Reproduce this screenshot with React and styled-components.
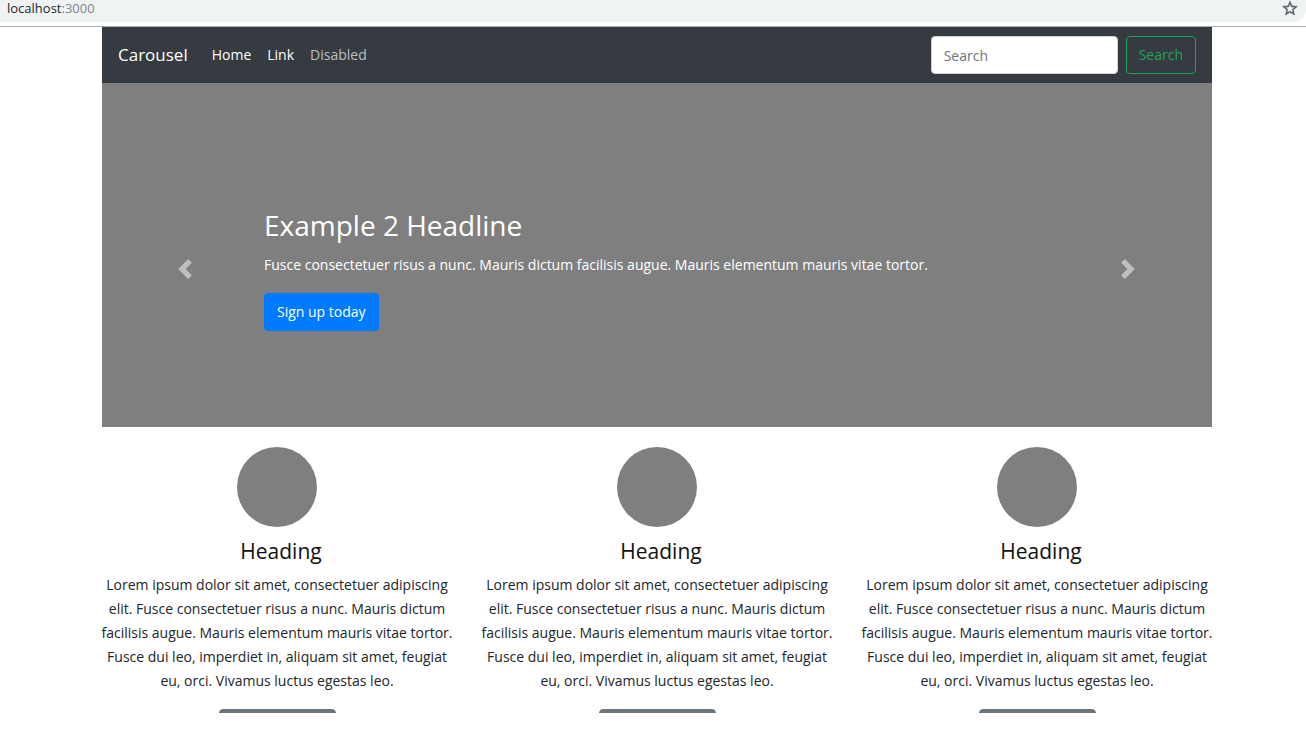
import React from "react";
import styled, { createGlobalStyle, css } from "styled-components";

const GlobalStyle = createGlobalStyle`
  *, *::before, *::after { box-sizing: border-box; }
  body {
    margin: 0;
    background: #fff;
    color: #212529;
    font-family: "Open Sans", "Noto Sans", sans-serif;
    font-size: 14px;
    line-height: 24px;
  }
  h1, h2, p { margin: 0; }
  button, input { font-family: inherit; font-size: inherit; line-height: inherit; }
`;

const Screen = styled.div`
  display: flex;
  flex-direction: column;
  height: 100vh;
  padding-bottom: 24px;
`;

const AddressBar = styled.header`
  display: flex;
  flex: none;
  align-items: flex-start;
  justify-content: space-between;
  height: 22px;
  margin-bottom: 4px;
  padding: 0 7px;
  background: #eff3f4;
  border-bottom-right-radius: 12px;
  font-size: 13px;
  line-height: 16px;
`;

const Port = styled.span`
  color: #80868b;
`;

const StarButton = styled.button`
  display: flex;
  padding: 0;
  border: 0;
  background: none;
  color: #5f6368;
`;

const Viewport = styled.div`
  flex: 1;
  min-height: 0;
  overflow: hidden;
  padding-left: 8px;
  border-top: 1px solid #a9abac;
`;

const Container = styled.div`
  max-width: 1110px;
  margin: 0 auto;
`;

const Navbar = styled.nav`
  display: flex;
  align-items: center;
  justify-content: space-between;
  height: 56px;
  padding: 0 16px;
  background: #353b41;
`;

const NavGroup = styled.div`
  display: flex;
  align-items: center;
  gap: 16px;
`;

const Brand = styled.a`
  margin-right: 8px;
  color: #fff;
  font-size: 17px;
  text-decoration: none;
`;

const NavLink = styled.a`
  color: ${(p) => (p.$muted ? "#bcbfc1" : "#fff")};
  font-weight: ${(p) => (p.$muted ? 400 : 500)};
  text-decoration: none;
`;

const SearchForm = styled.form`
  display: flex;
  gap: 8px;
`;

const SearchInput = styled.input`
  width: 187px;
  height: 38px;
  padding: 6px 12px;
  border: 1px solid #ced4da;
  border-radius: 4px;
  background: #fff;
  color: #495057;
  &::placeholder { color: #6c757d; opacity: 1; }
`;

const variants = {
  primary: css`
    border-color: #007bff;
    background: #007bff;
    color: #fff;
    font-weight: 500;
  `,
  outline: css`
    min-width: 70px;
    border-color: #1fa355;
    background: transparent;
    color: #1fa355;
  `,
  secondary: css`
    width: 117px;
    border-color: #6c757d;
    background: #6c757d;
    color: #fff;
  `,
};

const Button = styled.button`
  height: 38px;
  padding: 0 12px;
  border: 1px solid;
  border-radius: 4px;
  ${(p) => variants[p.$variant]}
`;

const Hero = styled.section`
  display: grid;
  grid-template-columns: 162px 1fr 162px;
  align-items: center;
  height: 344px;
  padding-top: 28px;
  background: #7f7f7f;
  color: #fff;
`;

const SlideControl = styled.button`
  display: flex;
  justify-content: center;
  padding: ${(p) => (p.$side === "left" ? "0 0 0 4px" : "0 6px 0 0")};
  border: 0;
  background: none;
  color: #fff;
  svg { opacity: 0.5; }
`;

const Headline = styled.h1`
  margin-bottom: 10px;
  font-size: 28px;
  font-weight: 400;
  line-height: 36px;
`;

const Lead = styled.p`
  margin-bottom: 16px;
  font-weight: 500;
`;

const Columns = styled.main`
  display: grid;
  grid-template-columns: repeat(3, 1fr);
  gap: 30px;
  padding-top: 20px;
`;

const Column = styled.article`
  display: flex;
  flex-direction: column;
  align-items: center;
  min-width: 0;
  text-align: center;
`;

const Circle = styled.div`
  width: 80px;
  height: 80px;
  margin-bottom: 8px;
  border-radius: 50%;
  background: #7f7f7f;
`;

const Heading = styled.h2`
  margin-bottom: 6px;
  padding-left: 8px;
  color: #111;
  font-size: 21px;
  font-weight: 400;
  line-height: 32px;
`;

const Copy = styled.p`
  margin-bottom: 16px;
  white-space: nowrap;
`;

const copyLines = [
  "Lorem ipsum dolor sit amet, consectetuer adipiscing",
  "elit. Fusce consectetuer risus a nunc. Mauris dictum",
  "facilisis augue. Mauris elementum mauris vitae tortor.",
  "Fusce dui leo, imperdiet in, aliquam sit amet, feugiat",
  "eu, orci. Vivamus luctus egestas leo.",
];

function Chevron({ d }) {
  return (
    <svg width="20" height="20" viewBox="0 0 8 8" fill="currentColor" aria-hidden="true">
      <path d={d} />
    </svg>
  );
}

export default function App() {
  return (
    <Screen>
      <GlobalStyle />
      <AddressBar>
        <span>localhost<Port>:3000</Port></span>
        <StarButton type="button" aria-label="Bookmark this page">
          <svg width="18" height="16" viewBox="1 1 22 21" fill="currentColor" stroke="currentColor" strokeWidth="0.5" aria-hidden="true">
            <path d="M22 9.24l-7.19-.62L12 2 9.19 8.63 2 9.24l5.46 4.73L5.82 21 12 17.27 18.18 21l-1.63-7.03L22 9.24zM12 15.4l-3.76 2.27 1-4.28-3.32-2.88 4.38-.38L12 6.1l1.71 4.04 4.38.38-3.32 2.88 1 4.28L12 15.4z" />
          </svg>
        </StarButton>
      </AddressBar>
      <Viewport>
        <Container>
          <Navbar>
            <NavGroup>
              <Brand href="#">Carousel</Brand>
              <NavLink href="#">Home</NavLink>
              <NavLink href="#">Link</NavLink>
              <NavLink $muted aria-disabled="true" href="#">Disabled</NavLink>
            </NavGroup>
            <SearchForm role="search">
              <SearchInput type="text" placeholder="Search" aria-label="Search" />
              <Button type="button" $variant="outline">Search</Button>
            </SearchForm>
          </Navbar>
          <Hero>
            <SlideControl type="button" $side="left" aria-label="Previous">
              <Chevron d="M5.25 0l-4 4 4 4 1.5-1.5-2.5-2.5 2.5-2.5-1.5-1.5z" />
            </SlideControl>
            <div>
              <Headline>Example 2 Headline</Headline>
              <Lead>
                Fusce consectetuer risus a nunc. Mauris dictum facilisis augue. Mauris elementum mauris vitae tortor.
              </Lead>
              <Button type="button" $variant="primary">Sign up today</Button>
            </div>
            <SlideControl type="button" $side="right" aria-label="Next">
              <Chevron d="M2.75 0l-1.5 1.5 2.5 2.5-2.5 2.5 1.5 1.5 4-4-4-4z" />
            </SlideControl>
          </Hero>
          <Columns>
            {[1, 2, 3].map((id) => (
              <Column key={id}>
                <Circle />
                <Heading>Heading</Heading>
                <Copy>
                  {copyLines.map((line, i) => (
                    <React.Fragment key={line}>
                      {i > 0 && <br />}
                      {line}
                    </React.Fragment>
                  ))}
                </Copy>
                <Button type="button" $variant="secondary" aria-label="View details" />
              </Column>
            ))}
          </Columns>
        </Container>
      </Viewport>
    </Screen>
  );
}
